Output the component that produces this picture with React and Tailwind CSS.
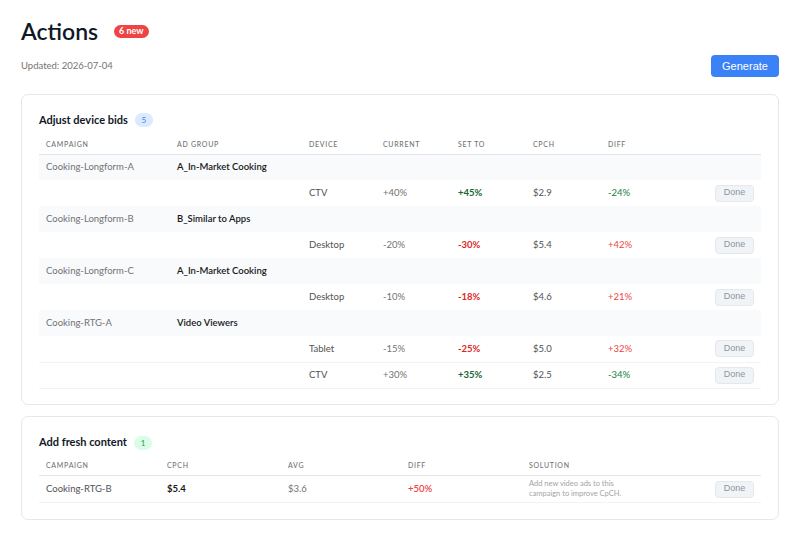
import React from "react";

const bids = [
  {
    campaign: "Cooking-Longform-A",
    adGroup: "A_In-Market Cooking",
    devices: [{ device: "CTV", current: "+40%", setTo: "+45%", cpch: "$2.9", diff: "-24%" }],
  },
  {
    campaign: "Cooking-Longform-B",
    adGroup: "B_Similar to Apps",
    devices: [{ device: "Desktop", current: "-20%", setTo: "-30%", cpch: "$5.4", diff: "+42%" }],
  },
  {
    campaign: "Cooking-Longform-C",
    adGroup: "A_In-Market Cooking",
    devices: [{ device: "Desktop", current: "-10%", setTo: "-18%", cpch: "$4.6", diff: "+21%" }],
  },
  {
    campaign: "Cooking-RTG-A",
    adGroup: "Video Viewers",
    devices: [
      { device: "Tablet", current: "-15%", setTo: "-25%", cpch: "$5.0", diff: "+32%" },
      { device: "CTV", current: "+30%", setTo: "+35%", cpch: "$2.5", diff: "-34%" },
    ],
  },
];

function DoneButton() {
  return (
    <button className="h-[17px] w-[39px] rounded-[4px] border border-[#e5e7eb] bg-[#f1f4f7] font-['Liberation_Sans'] text-[9px] text-[#8f959e]">
      Done
    </button>
  );
}

function Th({ children }) {
  return (
    <th className="px-[7px] pb-[4px] pt-[4px] text-left text-[7px] font-medium uppercase tracking-[0.1em] text-[#737373]">
      {children}
    </th>
  );
}

function CardTitle({ title, count, tone }) {
  const badge =
    tone === "green" ? "bg-[#dcfce7] text-[#16a34a]" : "bg-[#dbeafe] text-[#3b82f6]";
  return (
    <div className="flex h-[14px] items-center gap-[7px]">
      <h2 className="text-[11px] font-bold text-[#111827]">{title}</h2>
      <span className={`flex h-[14px] min-w-[18px] items-center justify-center rounded-full px-[5px] text-[8px] ${badge}`}>
        {count}
      </span>
    </div>
  );
}

export default function App() {
  return (
    <div className="min-h-screen bg-white px-[21px] pt-[15px] font-['Lato',sans-serif] text-[#404040]">

      {/* page header */}
      <div className="flex h-[32px] items-center gap-[16px]">
        <h1 className="text-[23px] font-semibold text-[#111827]">Actions</h1>
        <span className="flex h-[13px] items-center rounded-full bg-[#ef4444] px-[5px] text-[9px] font-bold text-white">
          6 new
        </span>
      </div>

      <div className="mt-[8px] flex h-[22px] items-center justify-between">
        <p className="text-[9.5px] text-[#737373]">Updated: 2026-07-04</p>
        <button className="h-[22px] w-[68px] rounded-[4px] bg-[#3b82f6] font-['Liberation_Sans'] text-[11px] text-white">
          Generate
        </button>
      </div>

      {/* device bids */}
      <div className="mt-[17px] rounded-[7px] border border-[#e5e7eb] px-[17px] pb-[15px] pt-[18px]">
        <CardTitle title="Adjust device bids" count="5" tone="blue" />
        <table className="mt-[7px] w-full table-fixed border-collapse text-[9.5px]">
          <colgroup>
            <col className="w-[131px]" />
            <col className="w-[132px]" />
            <col className="w-[74px]" />
            <col className="w-[75px]" />
            <col className="w-[75px]" />
            <col className="w-[75px]" />
            <col />
          </colgroup>
          <thead>
            <tr className="h-[20px] border-b border-[#e2e5e9]">
              <Th>Campaign</Th>
              <Th>Ad group</Th>
              <Th>Device</Th>
              <Th>Current</Th>
              <Th>Set to</Th>
              <Th>CPCH</Th>
              <Th>Diff</Th>
            </tr>
          </thead>
          <tbody>
            {bids.map((g) => (
              <React.Fragment key={g.campaign}>
                <tr className="h-[26px] bg-[#f8fafc]">
                  <td className="px-[7px] text-[#737373]">{g.campaign}</td>
                  <td className="px-[7px] font-semibold text-[#171717]">{g.adGroup}</td>
                  <td colSpan={5} />
                </tr>
                {g.devices.map((d, i) => {
                  const up = d.setTo.startsWith("+");
                  const worse = d.diff.startsWith("+");
                  return (
                    <tr
                      key={i}
                      className={`h-[26px] ${g.devices.length > 1 ? "border-b border-[#f1f3f5]" : ""}`}
                    >
                      <td />
                      <td />
                      <td className="px-[7px] text-[#525252]">{d.device}</td>
                      <td className="px-[7px] text-[#737373]">{d.current}</td>
                      <td className={`px-[7px] font-bold ${up ? "text-[#166534]" : "text-[#dc2626]"}`}>{d.setTo}</td>
                      <td className="px-[7px] text-[#525252]">{d.cpch}</td>
                      <td className="px-[7px]">
                        <div className="flex items-center justify-between">
                          <span className={worse ? "text-[#ef4444]" : "text-[#15803d]"}>{d.diff}</span>
                          <DoneButton />
                        </div>
                      </td>
                    </tr>
                  );
                })}
              </React.Fragment>
            ))}
          </tbody>
        </table>
      </div>

      {/* fresh content */}
      <div className="mt-[11px] rounded-[7px] border border-[#e5e7eb] px-[17px] pb-[16px] pt-[19px]">
        <CardTitle title="Add fresh content" count="1" tone="green" />
        <table className="mt-[6px] w-full table-fixed border-collapse text-[9.5px]">
          <colgroup>
            <col className="w-[121px]" />
            <col className="w-[121px]" />
            <col className="w-[120px]" />
            <col className="w-[121px]" />
            <col />
          </colgroup>
          <thead>
            <tr className="h-[20px] border-b border-[#e2e5e9]">
              <Th>Campaign</Th>
              <Th>CPCH</Th>
              <Th>Avg</Th>
              <Th>Diff</Th>
              <Th>Solution</Th>
            </tr>
          </thead>
          <tbody>
            <tr className="h-[27px] border-b border-[#f1f3f5]">
              <td className="px-[7px] text-[#525252]">Cooking-RTG-B</td>
              <td className="px-[7px] font-bold text-[#171717]">$5.4</td>
              <td className="px-[7px] text-[#737373]">$3.6</td>
              <td className="px-[7px] font-semibold text-[#ef4444]">+50%</td>
              <td className="px-[7px]">
                <div className="flex items-center justify-between">
                  <p className="w-[110px] text-[7.5px] leading-[10px] text-[#a3a3a3]">
                    Add new video ads to this campaign to improve CpCH.
                  </p>
                  <DoneButton />
                </div>
              </td>
            </tr>
          </tbody>
        </table>
      </div>
    </div>
  );
}
